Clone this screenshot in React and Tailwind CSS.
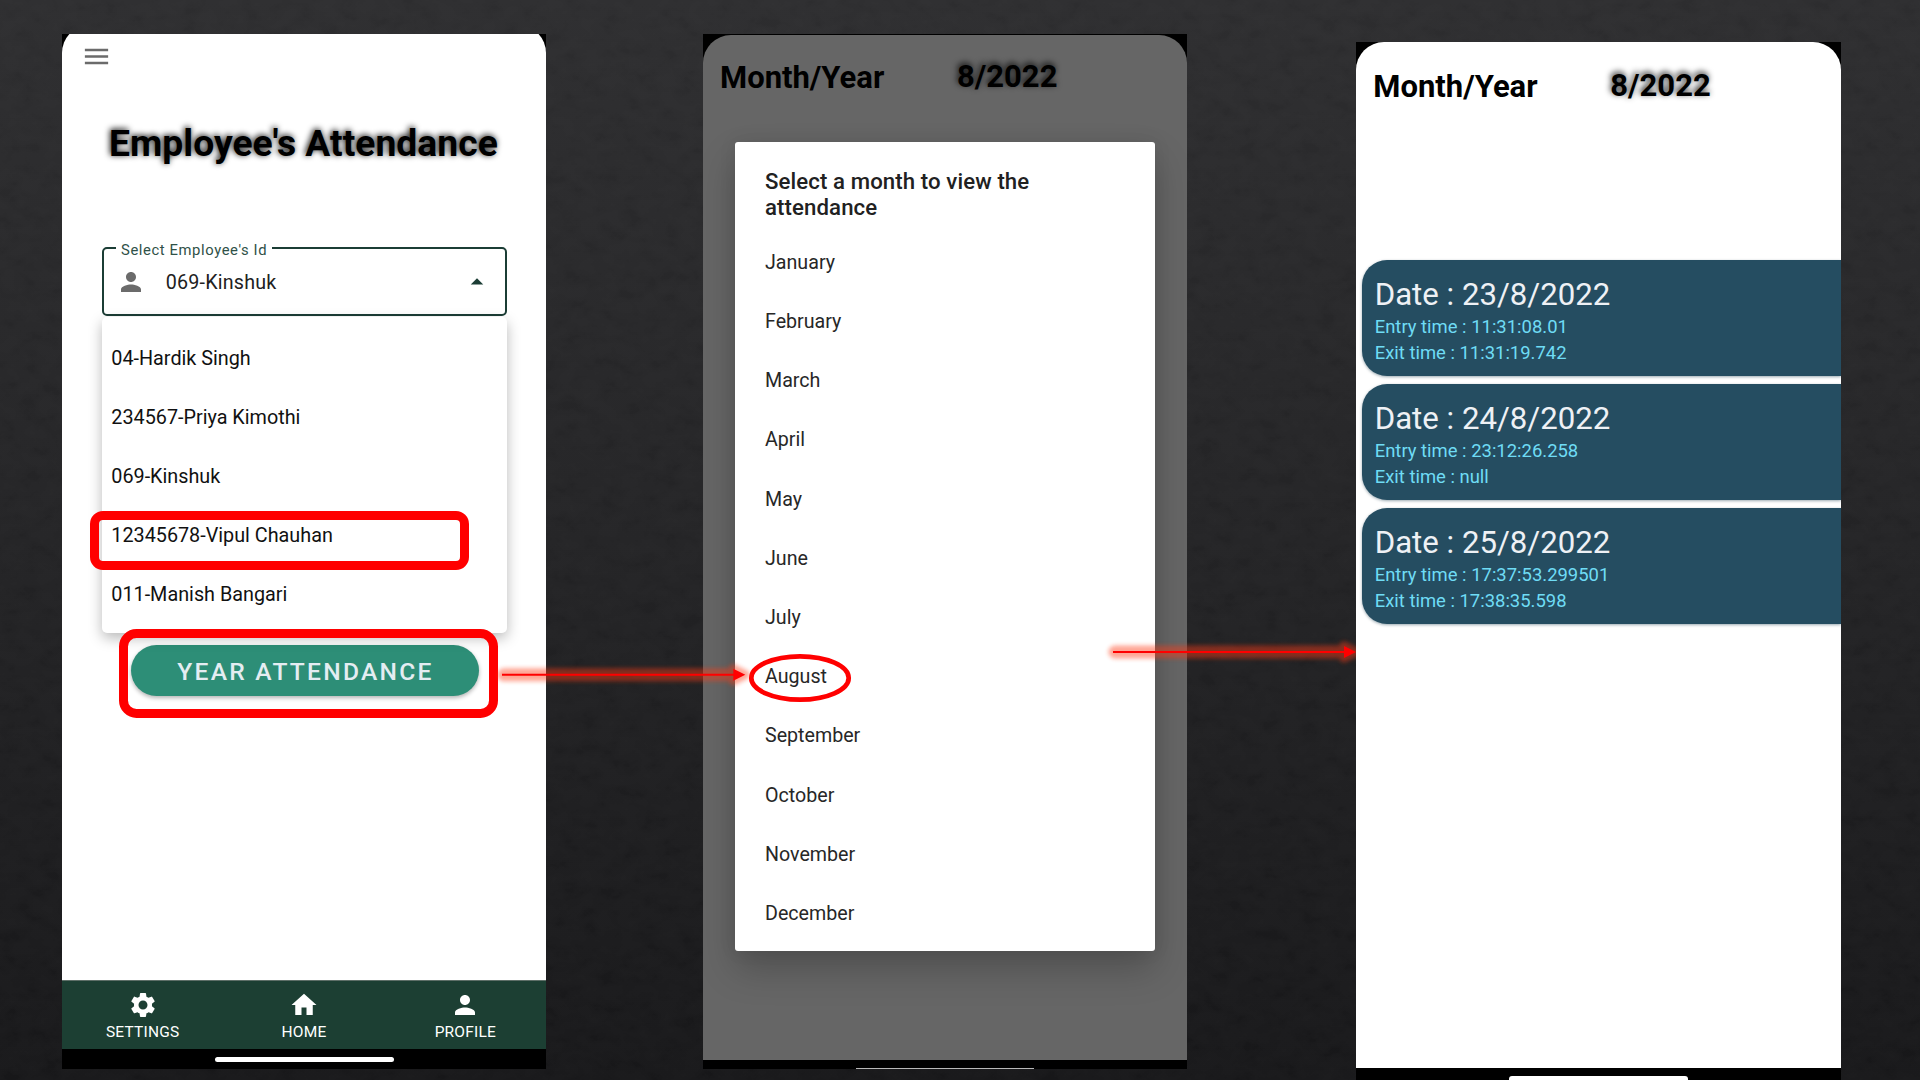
import React from "react";
import { MdHome, MdMenu, MdPerson, MdSettings, MdArrowDropUp } from "react-icons/md";

const EMPLOYEES = [
  "04-Hardik Singh",
  "234567-Priya Kimothi",
  "069-Kinshuk",
  "12345678-Vipul Chauhan",
  "011-Manish Bangari",
];

const MONTHS = [
  "January",
  "February",
  "March",
  "April",
  "May",
  "June",
  "July",
  "August",
  "September",
  "October",
  "November",
  "December",
];

const RECORDS = [
  { date: "23/8/2022", entry: "11:31:08.01", exit: "11:31:19.742" },
  { date: "24/8/2022", entry: "23:12:26.258", exit: "null" },
  { date: "25/8/2022", entry: "17:37:53.299501", exit: "17:38:35.598" },
];

function Texture() {
  return (
    <svg className="absolute inset-0 h-full w-full opacity-[0.014]" aria-hidden="true">
      <filter id="slate" x="0" y="0" width="100%" height="100%">
        <feTurbulence type="fractalNoise" baseFrequency="0.05 0.07" numOctaves="5" seed="7" />
        <feColorMatrix
          type="matrix"
          values="1.6 0 0 0 -0.4  1.6 0 0 0 -0.4  1.6 0 0 0 -0.4  0 0 0 0 1"
        />
      </filter>
      <rect width="100%" height="100%" filter="url(#slate)" />
    </svg>
  );
}

function NavItem({ icon: Icon, label }) {
  return (
    <div className="flex flex-1 flex-col items-center pt-[9px]">
      <Icon className="size-[30px]" />
      <span className="mt-[2px] text-[15.5px] leading-[21px] tracking-[0.2px]">{label}</span>
    </div>
  );
}

function EmployeeScreen() {
  return (
    <section className="flex h-[1035px] w-[484px] flex-col overflow-hidden bg-black">
      <div className="-mt-[9px] flex flex-1 flex-col rounded-t-[28px] bg-white">
        <div className="pt-[16px] pl-[19px]">
          <MdMenu className="size-[31px] text-[#6b6b6b]" />
        </div>
        <h1 className="mt-[49px] pl-[47px] text-[37.3px] leading-[44px] font-bold whitespace-nowrap text-black [text-shadow:-1px_-1px_6px_#000]">
          Employee's Attendance
        </h1>

        <div className="relative mt-[82px] ml-[39.5px] flex h-[69px] w-[405px] items-center rounded-[5px] border-[2.5px] border-[#1b3d35] pl-[12px]">
          <span className="absolute -top-[9px] left-[12.5px] bg-white px-[5px] text-[14.8px] leading-[20px] tracking-[0.6px] text-[#2f5148]">
            Select Employee's Id
          </span>
          <MdPerson className="size-[30px] text-[#6b6b6b]" />
          <span className="ml-[20.3px] flex-1 pt-[3px] text-[19.7px] leading-6 tracking-[0.2px] text-[#212121]">
            069-Kinshuk
          </span>
          <MdArrowDropUp className="mr-[13px] size-[30px] text-[#1b3d35]" />
        </div>

        <ul className="relative z-10 mt-px ml-[39.5px] h-[315.5px] w-[405px] rounded-[5px] bg-white pt-[11.6px] shadow-[0_5px_14px_rgba(0,0,0,0.28)]">
          {EMPLOYEES.map((name) => (
            <li
              key={name}
              className="h-[59.17px] pl-[9.8px] text-[19.8px] leading-[59px] text-[#111]"
            >
              {name}
            </li>
          ))}
        </ul>

        <button className="mt-[12px] ml-[68.5px] h-[51px] w-[348px] rounded-full bg-[#2d8e77] pt-[2px] pl-[2px] text-[24.6px] leading-[50px] font-medium tracking-[2.25px] text-[#e4edf2] shadow-[0_2px_4px_rgba(0,0,0,0.3)]">
          YEAR ATTENDANCE
        </button>
      </div>

      <nav className="flex h-[69px] border-t border-[#5e6f68] bg-[#1c3f33] text-white">
        <NavItem icon={MdSettings} label="SETTINGS" />
        <NavItem icon={MdHome} label="HOME" />
        <NavItem icon={MdPerson} label="PROFILE" />
      </nav>
      <div className="flex h-5 justify-center pt-2">
        <div className="h-[5px] w-[179px] rounded-full bg-white" />
      </div>
    </section>
  );
}

function MonthHeader() {
  return (
    <div className="flex text-[31px] leading-9 font-bold whitespace-nowrap text-black">
      <span className="w-[237px]">Month/Year</span>
      <span className="-mt-px [text-shadow:-1px_-2px_6px_rgba(0,0,0,0.9)]">8/2022</span>
    </div>
  );
}

function MonthDialogScreen() {
  return (
    <section className="ml-[157px] flex h-[1035px] w-[484px] flex-col overflow-hidden bg-black">
      <div className="mt-px h-[1025px] shrink-0 rounded-t-[28px] bg-[#666] pt-[25.4px]">
        <div className="pl-[17px]">
          <MonthHeader />
        </div>
        <div className="mt-[46.1px] ml-[32px] h-[809px] w-[420px] rounded-[3px] bg-white pl-[30px] shadow-[0_18px_36px_rgba(0,0,0,0.22),0_0_18px_rgba(0,0,0,0.08)]">
          <h2 className="pt-[25.5px] text-[22.2px] leading-[26px] font-medium tracking-[0.1px] text-[#212121]">
            Select a month to view the
            <br />
            attendance
          </h2>
          <ul className="mt-[12.9px] text-[19.65px] text-[#272727]">
            {MONTHS.map((month) => (
              <li key={month} className="h-[59.19px] leading-[59px]">
                {month}
              </li>
            ))}
          </ul>
        </div>
      </div>
      <div className="mt-auto ml-[153px] h-px w-[178px] bg-[#b8b8b8]" />
    </section>
  );
}

function RecordsScreen() {
  return (
    <section className="relative z-20 mt-[8px] ml-[169px] flex h-[1038px] w-[485px] flex-col overflow-hidden bg-black">
      <div className="h-[1026px] shrink-0 rounded-t-[28px] bg-white pt-[27px]">
        <div className="pl-[17.3px]">
          <MonthHeader />
        </div>
        <div className="mt-[154.5px] flex flex-col gap-[7.5px] pl-[6px]">
          {RECORDS.map((r) => (
            <article
              key={r.date}
              className="h-[116.5px] rounded-l-[25px] bg-[#254d61] pt-[17.5px] pl-[12.7px] shadow-[0_1px_3px_rgba(0,40,60,0.4)]"
            >
              <h3 className="text-[31.2px] leading-9 text-[#eef1f5]">Date : {r.date}</h3>
              <div className="pt-[2.3px] text-[18.45px] leading-[25.3px] text-[#6fdcf5]">
                <p>Entry time : {r.entry}</p>
                <p>Exit time : {r.exit}</p>
              </div>
            </article>
          ))}
        </div>
      </div>
      <div className="mt-[8px] ml-[153px] h-[6px] w-[179px] shrink-0 rounded-full bg-white" />
    </section>
  );
}

function Arrow({ x1, x2, y }) {
  const shaft = `M${x1} ${y}H${x2 - 10}`;
  const halo = `M${x1 + 2} ${y}H${x2 - 10}`;
  const head = `M${x2 - 12} ${y - 6}L${x2} ${y}L${x2 - 12} ${y + 6}Z`;
  return (
    <g>
      <g filter="url(#glow)" opacity="0.45">
        <path d={halo} stroke="#ff3a12" strokeWidth="13" strokeLinecap="round" />
        <path d={head} fill="#ff3a12" stroke="#ff3a12" strokeWidth="9" strokeLinejoin="round" />
      </g>
      <path d={shaft} stroke="#f00" strokeWidth="2" />
      <path d={head} fill="#f00" />
    </g>
  );
}

function Annotations() {
  return (
    <svg
      className="pointer-events-none absolute inset-0 z-10"
      width="1920"
      height="1080"
      viewBox="0 0 1920 1080"
      fill="none"
    >
      <filter id="glow" filterUnits="userSpaceOnUse" x="0" y="0" width="1920" height="1080">
        <feGaussianBlur stdDeviation="2" />
      </filter>
      <rect x="94.5" y="515.5" width="370" height="50" rx="8.5" stroke="#f00" strokeWidth="9" />
      <rect x="123.5" y="633.5" width="370" height="80" rx="13" stroke="#f00" strokeWidth="9" />
      <ellipse cx="800" cy="678" rx="48.7" ry="21.7" stroke="#f00" strokeWidth="4.7" />
      <Arrow x1={502} x2={745.3} y={674.8} />
      <Arrow x1={1113} x2={1356} y={652} />
    </svg>
  );
}

export default function App() {
  return (
    <main className="relative h-[1080px] w-[1920px] overflow-hidden bg-linear-to-b from-[#2e2e30] via-[#242426] to-[#18181a] font-['Roboto',sans-serif]">
      <Texture />
      <div className="relative flex items-start pt-[34px] pl-[62px]">
        <EmployeeScreen />
        <MonthDialogScreen />
        <RecordsScreen />
      </div>
      <Annotations />
    </main>
  );
}
